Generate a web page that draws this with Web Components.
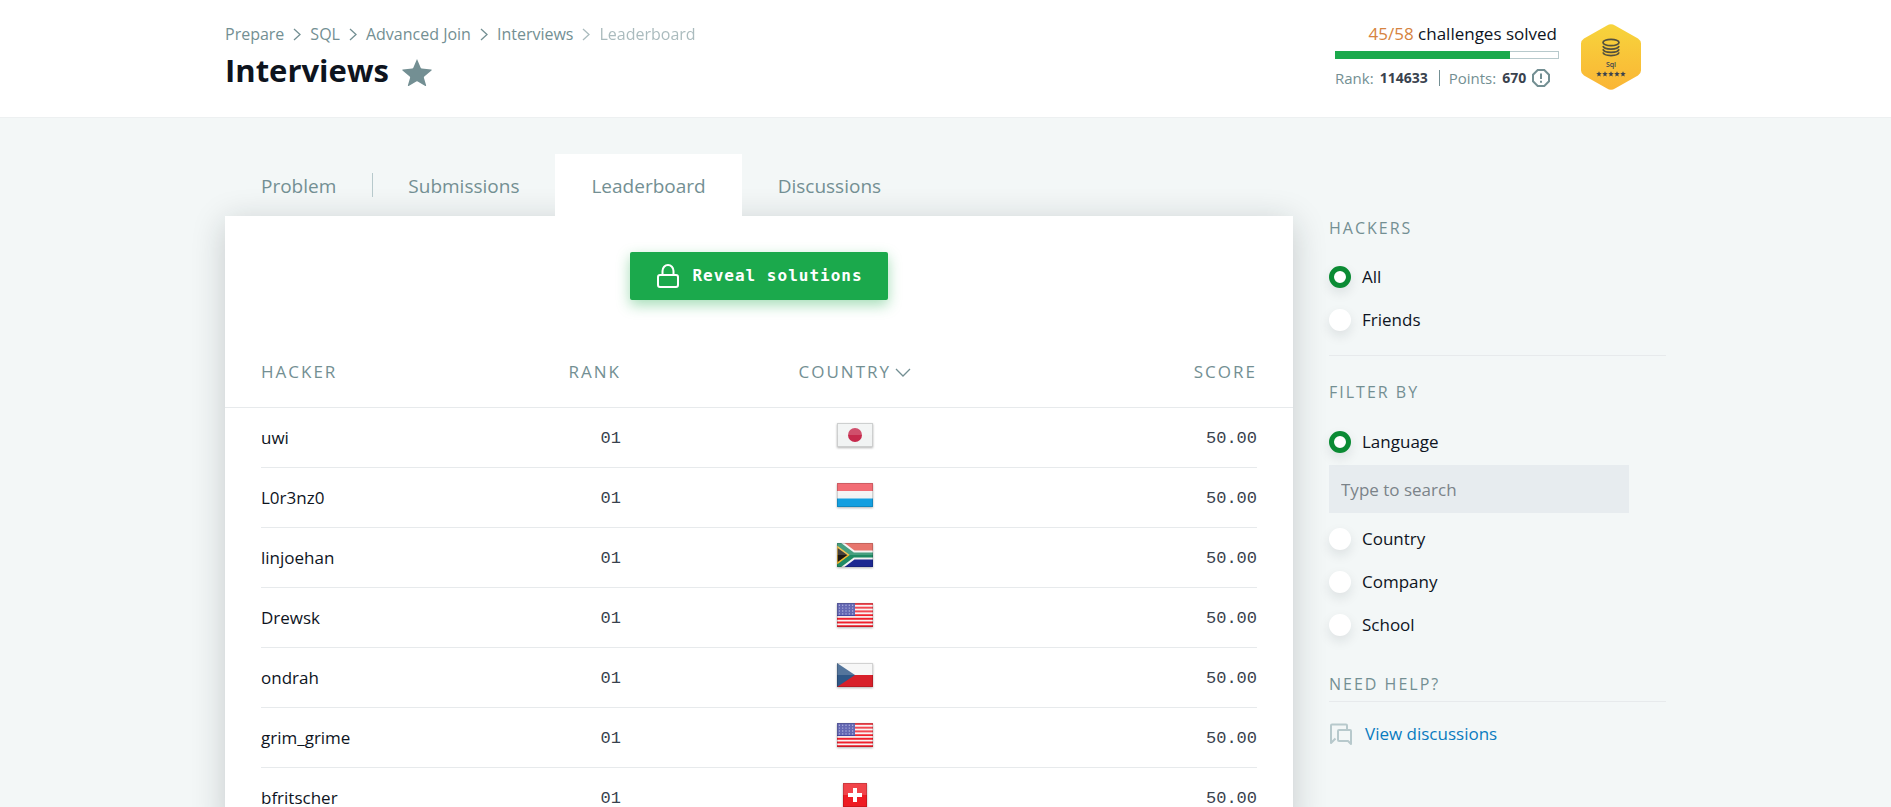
<!DOCTYPE html>
<html lang="en">
<head>
<meta charset="utf-8">
<meta name="viewport" content="width=device-width, initial-scale=1">
<title>Interviews | Leaderboard</title>
<style>
  html { background: #f3f7f7; scrollbar-width: none; }
  body {
    margin: 0;
    font-family: "Open Sans", "Noto Sans", sans-serif;
    font-size: 17px;
    line-height: 24px;
    color: #0e141e;
    --muted: #738f93;
    --green: #1ba94c;
    --line: #e7eaec;
    --page: 1441px;
  }
</style>
</head>
<body>
<challenge-page></challenge-page>

<script>
const define = (name, html, setup) => {
  const template = document.createElement('template');
  template.innerHTML = html;
  customElements.define(name, class extends HTMLElement {
    constructor() {
      super();
      this.attachShadow({ mode: 'open' }).append(template.content.cloneNode(true));
    }
    connectedCallback() { if (setup) setup(this, this.shadowRoot); }
  });
};

/* ---------- flags ---------- */
const usa = () => {
  let s = '<rect width="36" height="24" fill="#f7f2f2"/>';
  for (let i = 0; i < 7; i++) s += `<rect y="${i * 3.7}" width="36" height="1.95" fill="#f0202c"/>`;
  s += '<rect width="18" height="13" fill="#4347a3"/><g fill="#a9abdc">';
  for (let y = 0; y < 4; y++) for (let x = 0; x < 5; x++) s += `<circle cx="${2.4 + x * 3.3}" cy="${2.2 + y * 2.9}" r=".7"/>`;
  return s + '</g>';
};
const FLAGS = {
  Japan: '<rect width="36" height="24" fill="#f1f3f3"/><circle cx="18" cy="12" r="7" fill="#c6294c"/>',
  Luxembourg: '<rect width="36" height="8" fill="#ef4d57"/><rect y="8" width="36" height="8" fill="#f3f3f3"/><rect y="15.500" width="36" height="8.500" fill="#149fe0"/>',
  'South Africa': '<rect width="36" height="12" fill="#e2584f"/><rect y="12" width="36" height="12" fill="#1c2891"/><path d="M0 0 16 12 0 24M16 12H36" fill="none" stroke="#f2f2f2" stroke-width="9"/><path d="M0 0v24L16 12z" fill="#f0b731"/><path d="M0 0 16 12 0 24M16 12H36" fill="none" stroke="#1f8a64" stroke-width="5"/><path d="M0 3.500v17L11.500 12z" fill="#1d1712" stroke="#f0b731" stroke-width="1.500"/>',
  'United States': usa(),
  'Czech Republic': '<rect width="36" height="12" fill="#f6f6f6"/><rect y="12" width="36" height="12" fill="#d8202a"/><path d="M0 0v24L18 12z" fill="#2f5787"/>',
  Switzerland: '<rect x="6" width="24" height="24" fill="#ee1c23"/><path d="M16 5h4v5h5v4h-5v5h-4v-5h-5v-4h5z" fill="#fff"/>'
};
define('country-flag', `
  <style>
    :host { display: inline-block; width: 36px; height: 24px; filter: drop-shadow(0 1px 1px rgba(0,0,0,.3)); vertical-align: top; }
    svg { display: block; overflow: hidden; }
  </style>
  <svg width="36" height="24" viewBox="0 0 36 24" role="img"></svg>`,
  (host, root) => {
    const name = host.getAttribute('country');
    const x = name === 'Switzerland' ? 6 : 0;
    const svg = root.querySelector('svg');
    svg.setAttribute('aria-label', name);
    svg.innerHTML = FLAGS[name]
      + `<rect x="${x}" width="${36 - 2 * x}" height="12" fill="#fff" opacity=".18"/>`
      + `<rect x="${x + .5}" y=".5" width="${35 - 2 * x}" height="23" fill="none" stroke="#000" stroke-opacity=".15"/>`;
  });

/* ---------- breadcrumbs ---------- */
define('bread-crumbs', `
  <style>
    :host { display: block; }
    ol { display: flex; flex-wrap: wrap; gap: 9px; margin: 0; padding: 0; list-style: none; font-size: 16px; color: var(--muted); }
    li { display: flex; align-items: center; gap: 9px; }
    a { color: inherit; text-decoration: none; }
    .last { opacity: .6; }
  </style>
  <nav aria-label="Breadcrumb"><ol></ol></nav>`,
  (host, root) => {
    const items = host.getAttribute('path').split('/');
    root.querySelector('ol').innerHTML = items.map((t, i) =>
      `<li class="${i === items.length - 1 ? 'last' : ''}">${i ? '<svg width="8" height="14" viewBox="1 0 8 14" fill="none" stroke="currentColor" stroke-width="1.3" aria-hidden="true"><path d="M2 2l6 5.500-6 5.500"/></svg>' : ''}<a href="#">${t}</a></li>`).join('');
  });

/* ---------- progress ---------- */
define('progress-summary', `
  <style>
    :host { display: flex; align-items: flex-start; gap: 22px; }
    .stats { width: 224px; }
    .solved { text-align: right; padding-right: 2px; white-space: nowrap; }
    .solved span { color: #d68340; }
    .bar { box-sizing: border-box; height: 8px; border: 1px solid #b7c9cc; margin: 5px 0 9px; }
    .bar div { width: 79%; height: 8px; margin: -1px; background: var(--green); }
    .row { display: flex; align-items: center; gap: 6px; font-size: 15px; line-height: 20px; color: var(--muted); white-space: nowrap; }
    b { font-size: 14px; color: #39424e; }
    .sep { width: 1px; height: 16px; margin: 0 3px 0 5px; background: var(--muted); }
    .badge { padding-top: 2px; }
  </style>
  <div class="stats">
    <div class="solved"><span>45/58</span> challenges solved</div>
    <div class="bar" role="progressbar" aria-label="Challenges solved" aria-valuenow="45" aria-valuemax="58"><div></div></div>
    <div class="row">Rank: <b>114633</b><i class="sep"></i>Points: <b>670</b>
      <svg width="18" height="18" viewBox="0 0 18 18" fill="none" stroke="currentColor" stroke-width="2" aria-hidden="true"><path d="M5.700 1h6.600L17 5.700v6.600L12.300 17H5.700L1 12.300V5.700z"/><path d="M9 4.500v5.500M9 11.700v2"/></svg>
    </div>
  </div>
  <svg class="badge" width="60" height="66" viewBox="0 0 60 66" role="img" aria-label="Sql badge, five stars">
    <defs><linearGradient id="gold" x2="0" y2="1"><stop stop-color="#f7d43c"/><stop offset="1" stop-color="#fab535"/></linearGradient></defs>
    <path d="M26 1.500q4-2.500 8 0L57 14.500q3 2 3 5v27q0 3-3 5L34 64.500q-4 2.500-8 0L3 51.500q-3-2-3-5v-27q0-3 3-5z" fill="url(#gold)"/>
    <g fill="none" stroke="#52503f" stroke-width="1.700"><ellipse cx="30" cy="18.500" rx="8" ry="3.200"/><path d="M22 22c1 4.200 15 4.200 16 0M22 25.200c1 4.200 15 4.200 16 0M22 28.400c1 4.200 15 4.200 16 0"/></g>
    <text x="30" y="43" text-anchor="middle" font-size="7" font-weight="600" fill="#39424e">Sql</text>
    <g fill="#39424e" id="stars"></g>
  </svg>`,
  (host, root) => {
    const star = 'M0-2.800.8-.9 2.800-.8 1.200.5 1.700 2.400 0 1.400-1.700 2.400-1.200.5-2.800-.8-.8-.9z';
    root.querySelector('#stars').innerHTML = [18, 24, 30, 36, 42].map(x => `<path transform="translate(${x} 50)" d="${star}"/>`).join('');
  });

/* ---------- page header ---------- */
define('page-header', `
  <style>
    :host { display: block; background: #fff; border-bottom: 1px solid #edf0f1; }
    .inner { display: flex; justify-content: space-between; align-items: flex-start; box-sizing: border-box; max-width: var(--page); margin: 0 auto; padding: 22px 25px 23px 0; }
    .title { display: flex; align-items: center; gap: 13px; }
    h1 { margin: 0; font-size: 31px; line-height: 48px; font-weight: 700; }
    button { display: block; border: 0; padding: 4px 0 0; background: none; color: var(--muted); }
    svg { display: block; }
  </style>
  <div class="inner">
    <div>
      <bread-crumbs path="Prepare/SQL/Advanced Join/Interviews/Leaderboard"></bread-crumbs>
      <div class="title"><h1>Interviews</h1>
        <button type="button" aria-label="Bookmark challenge"><svg width="30" height="27" viewBox="0 0 30 27" fill="currentColor"><path d="M15 0l3.700 8.800q.3.700 1.100.8l9.400.8q1 .2.300 1l-7.200 6.200q-.5.500-.4 1.200l2.200 7.500q.1 1-.8.600l-7.600-4.500q-.7-.4-1.400 0L6.700 26.900q-.9.400-.8-.6l2.200-7.500q.1-.7-.4-1.200L.5 11.400q-.7-.8.300-1l9.400-.8q.8-.1 1.100-.8z"/></svg></button>
      </div>
    </div>
    <progress-summary></progress-summary>
  </div>`);

/* ---------- tabs ---------- */
define('tab-bar', `
  <style>
    :host { display: block; }
    nav { display: flex; }
    a { position: relative; z-index: 1; padding: 20px 36px 18px; font-size: 19px; line-height: 24px; color: var(--muted); text-decoration: none; }
    i { width: 1px; height: 24px; margin: 19px 0; background: #b7c9cc; }
    a[aria-current] { background: #fff; }
    i + a { padding-left: 35px; }
  </style>
  <nav><a href="#">Problem</a><i></i><a href="#">Submissions</a><a href="#" aria-current="page">Leaderboard</a><a href="#">Discussions</a></nav>`);

/* ---------- leaderboard ---------- */
define('leader-board', `
  <style>
    :host { display: block; background: #fff; box-shadow: 0 6px 32px rgba(20,30,35,.2); }
    .action { display: flex; justify-content: center; padding: 36px 0 36px; }
    button { display: flex; align-items: center; gap: 13px; height: 48px; padding: 0 25px 0 27px; border: 0; border-radius: 2px; background: var(--green); color: #fff; box-shadow: 0 5px 14px rgba(27,169,76,.4); font: 700 16px/24px "DejaVu Sans Mono", monospace; letter-spacing: 1px; }
    table { width: 100%; table-layout: fixed; border-collapse: collapse; }
    th, td { padding: 0; text-align: left; font-weight: 400; }
    th { height: 71px; border-bottom: 1px solid var(--line); color: var(--muted); letter-spacing: 2px; text-transform: uppercase; }
    tbody tr { height: 60px; background: linear-gradient(var(--line), var(--line)) center bottom / calc(100% - 72px) 1px no-repeat; }
    th:first-child, td:first-child { padding-left: 36px; width: 22%; }
    th:nth-child(2), td:nth-child(2) { width: 11.7%; text-align: right; }
    th:nth-child(3), td:nth-child(3) { width: 43.8%; text-align: center; }
    th:last-child, td:last-child { padding-right: 36px; text-align: right; }
    td:nth-child(2), td:last-child { padding-top: 3px; font-family: "Liberation Mono", monospace; color: #39424e; }
    td:nth-child(3) { padding-bottom: 5px; }
    a { color: inherit; text-decoration: none; }
  </style>
  <div class="action"><button type="button">
    <svg width="22" height="24" viewBox="0 0 22 24" fill="none" stroke="currentColor" stroke-width="2" aria-hidden="true"><rect x="1" y="11" width="20" height="12" rx="2"/><path d="M5.500 11V7a5.500 6 0 0 1 11 0v4"/></svg>Reveal solutions</button></div>
  <table>
    <thead><tr><th scope="col">Hacker</th><th scope="col">Rank</th><th scope="col">Country<svg width="16" height="10" viewBox="0 0 16 10" fill="none" stroke="currentColor" stroke-width="1.300" style="margin-left:4px" aria-hidden="true"><path d="M1 1l7 7 7-7"/></svg></th><th scope="col">Score</th></tr></thead>
    <tbody></tbody>
  </table>`,
  (host, root) => {
    const rows = [['uwi', 'Japan'], ['L0r3nz0', 'Luxembourg'], ['linjoehan', 'South Africa'], ['Drewsk', 'United States'],
      ['ondrah', 'Czech Republic'], ['grim_grime', 'United States'], ['bfritscher', 'Switzerland']];
    root.querySelector('tbody').innerHTML = rows.map(([name, country]) =>
      `<tr><td><a href="#">${name}</a></td><td>01</td><td><country-flag country="${country}"></country-flag></td><td>50.00</td></tr>`).join('');
  });

/* ---------- sidebar ---------- */
define('side-section', `
  <style>
    :host { display: block; }
    h2 { margin: 0; font-size: 16px; line-height: 24px; font-weight: 400; letter-spacing: 2px; text-transform: uppercase; color: var(--muted); }
  </style>
  <h2><slot name="title"></slot></h2><slot></slot>`);

const radioStyle = `
  :host { display: block; }
  fieldset { margin: 0; padding: 0; border: 0; min-width: 0; }
  label { display: flex; align-items: center; gap: 11px; height: 43px; }
  input[type=radio] { appearance: none; width: 22px; height: 22px; margin: 0; border-radius: 50%; background: #fff; box-shadow: 0 5px 12px rgba(20,30,35,.1); }
  input[type=radio]:checked { border: 5px solid #0b8b34; }`;
define('hacker-scope', `
  <style>${radioStyle}</style>
  <fieldset aria-label="Hackers">
    <label><input type="radio" name="scope" checked>All</label>
    <label><input type="radio" name="scope">Friends</label>
  </fieldset>`);
define('hacker-filter', `
  <style>${radioStyle}
    input[type=text] { box-sizing: border-box; display: block; width: 300px; max-width: 100%; height: 48px; margin: 2px 0 4px; padding: 0 12px; border: 0; border-radius: 0; background: #e7ecef; font: inherit; color: inherit; }
    input::placeholder { color: #7b8389; }
  </style>
  <fieldset aria-label="Filter by">
    <label><input type="radio" name="filter" checked>Language</label>
    <input type="text" placeholder="Type to search" aria-label="Language">
    <label><input type="radio" name="filter">Country</label>
    <label><input type="radio" name="filter">Company</label>
    <label><input type="radio" name="filter">School</label>
  </fieldset>`);

define('help-link', `
  <style>
    :host { display: block; }
    a { display: flex; align-items: center; gap: 12px; color: #097bbf; text-decoration: none; }
    svg { color: #b7c9cc; }
  </style>
  <a href="#"><svg width="24" height="22" viewBox="0 0 24 22" fill="none" stroke="currentColor" stroke-width="2" stroke-linejoin="round" aria-hidden="true"><path d="M18 6V2.500q0-1-1-1H3q-1 0-1 1V20l4.500-4.500"/><path d="M10 7h11q1 0 1 1v13l-3-3h-9q-1 0-1-1V8q0-1 1-1z"/></svg><slot></slot></a>`);

define('side-bar', `
  <style>
    :host { display: block; }
    hr { height: 1px; margin: 0; border: 0; background: var(--line); }
    hacker-scope { padding: 15px 0 14px; }
    .filter { padding-top: 24px; }
    hacker-filter { padding: 16px 0 26px; }
    help-link { padding-top: 20px; }
    .help hr { margin-top: 5px; }
  </style>
  <side-section><span slot="title">Hackers</span><hacker-scope></hacker-scope></side-section>
  <hr>
  <side-section class="filter"><span slot="title">Filter by</span><hacker-filter></hacker-filter></side-section>
  <side-section class="help"><span slot="title">Need Help?</span><hr><help-link>View discussions</help-link></side-section>`);

define('challenge-page', `
  <style>
    :host { display: block; }
    main { display: grid; grid-template-columns: minmax(0, 1fr) 337px; column-gap: 36px; max-width: var(--page); margin: 0 auto; padding-top: 36px; }
    side-bar { padding-top: 62px; }
  </style>
  <page-header></page-header>
  <main><div><tab-bar></tab-bar><leader-board></leader-board></div><side-bar></side-bar></main>`);
</script>
</body>
</html>
